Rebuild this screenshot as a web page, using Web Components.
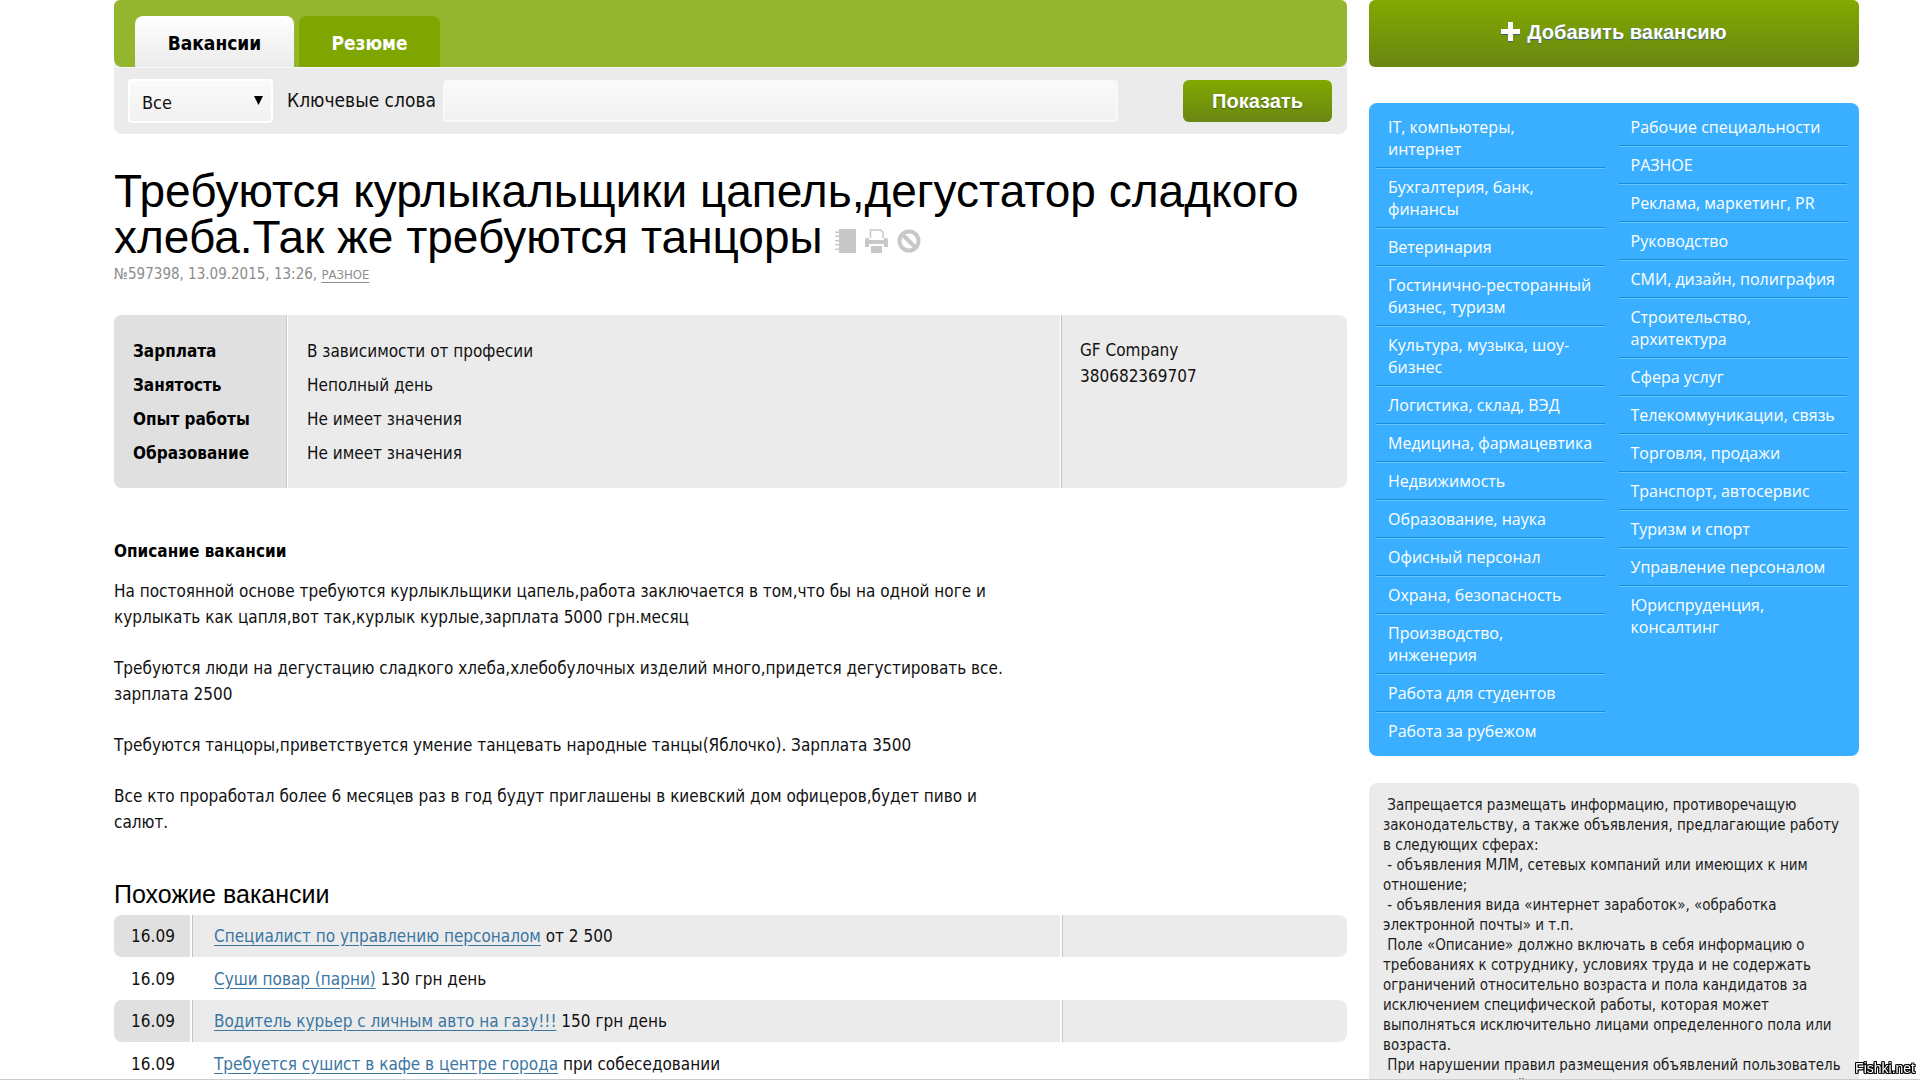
<!DOCTYPE html>
<html lang="ru">
<head>
<meta charset="utf-8">
<title>Требуются курлыкальщики цапель</title>
<style>
body{margin:0;background:#fff;color:#111;font-family:"DejaVu Sans Condensed","Noto Sans",sans-serif;font-size:17px}
</style>
</head>
<body>
<job-page>
  <job-search slot="main"></job-search>
  <job-title slot="main" meta="№597398, 13.09.2015, 13:26," category="РАЗНОЕ">Требуются курлыкальщики цапель,дегустатор сладкого хлеба.Так же требуются танцоры</job-title>
  <job-info slot="main"></job-info>
  <job-description slot="main" heading="Описание вакансии">
    <p>На постоянной основе требуются курлыкльщики цапель,работа заключается в том,что бы на одной ноге и курлыкать как цапля,вот так,курлык курлые,зарплата 5000 грн.месяц</p>
    <p>Требуются люди на дегустацию сладкого хлеба,хлебобулочных изделий много,придется дегустировать все. зарплата 2500</p>
    <p>Требуются танцоры,приветствуется умение танцевать народные танцы(Яблочко). Зарплата 3500</p>
    <p>Все кто проработал более 6 месяцев раз в год будут приглашены в киевский дом офицеров,будет пиво и салют.</p>
  </job-description>
  <similar-jobs slot="main"></similar-jobs>
  <add-button slot="side">Добавить вакансию</add-button>
  <category-list slot="side"></category-list>
  <rules-note slot="side"></rules-note>
</job-page>

<script>
const define = (name, html) => customElements.define(name, class extends HTMLElement {
  connectedCallback() {
    if (this.shadowRoot) return;
    const root = this.attachShadow({mode: 'open'});
    root.innerHTML = typeof html === 'function' ? html(this) : html;
  }
});

define('job-page', `
<style>
:host{display:block;height:100vh;overflow:hidden}
.cols{display:flex;gap:22px;padding:0 61px 0 114px}
main{flex:1;min-width:0}
aside{width:490px}
.edge{position:fixed;left:0;right:0;bottom:0;height:1px;background:#ccc}
.mark{position:fixed;right:5px;bottom:2px;font:14px/20px "Liberation Sans",sans-serif;color:#fff;
 text-shadow:1px 0 #000,-1px 0 #000,0 1px #000,0 -1px #000,1px 1px #000,-1px -1px #000,1px -1px #000,-1px 1px #000}
</style>
<div class="cols"><main><slot name="main"></slot></main><aside><slot name="side"></slot></aside></div>
<div class="edge"></div><div class="mark">Fishki.net</div>`);

define('job-search', `
<style>
:host{display:block;background:#ebebeb;border-radius:8px}
nav{display:flex;align-items:flex-end;gap:5px;height:51px;padding:16px 21px 0;background:#94b62f;border-radius:6px 6px 8px 8px}
nav a{display:block;box-sizing:border-box;height:51px;border-radius:8px 8px 0 0;font-weight:bold;font-size:19px;line-height:54px;text-align:center;text-decoration:none}
.on{width:159px;background:linear-gradient(#fff,#ebebeb);color:#000}
.off{width:141px;background:#7ea500;color:#fff}
form{display:flex;align-items:center;padding:11px 15px 11px 14px;border-top:1px solid #f8f8f8}
.pick{display:grid;width:145px;align-items:center;color:#111}
.pick>*{grid-area:1/1}
select{appearance:none;box-sizing:border-box;width:100%;height:44px;padding:2px 12px 0;border:2px solid #fff;border-radius:4px;background:linear-gradient(#fbfafb,#f2f0f1);font:18px "DejaVu Sans Condensed",sans-serif;color:#111}
.pick svg{justify-self:end;margin:0 10px 1px 0;pointer-events:none}
label.key{flex:1;display:flex;align-items:center;gap:7px;margin:0 65px 0 14px;font-size:19px;white-space:nowrap}
label.key span{padding-bottom:2px}
input{flex:1;min-width:0;box-sizing:border-box;height:42px;border:2px solid #f9f9f9;border-radius:4px;background:linear-gradient(#fbfafb,#f2f0f1);font:inherit}
button{width:149px;height:42px;border:0;border-radius:6px;background:linear-gradient(#82a900,#6a8612);color:#fff;font:bold 20px "Liberation Sans",sans-serif;text-shadow:0 1px 1px #4c6208}
</style>
<nav><a class="on" href="#v">Вакансии</a><a class="off" href="#r">Резюме</a></nav>
<form>
<div class="pick"><select aria-label="Раздел"><option>Все</option></select><svg width="9" height="9" viewBox="0 0 9 9"><path d="M0 0h9L4.500 9z"/></svg></div>
<label class="key"><span>Ключевые слова</span><input type="text"></label>
<button type="button">Показать</button>
</form>`);

define('job-title', el => `
<style>
:host{display:block;padding-top:34px}
h1{margin:0;font:46px/46px "Liberation Sans",sans-serif;color:#000}
.tools{display:inline-flex;gap:9px;line-height:24px;vertical-align:0}
.tools svg{display:block}
.tools a{color:#c8c8c8}
p{margin:3px 0 0;font-size:15px;line-height:22px;color:#8c8c8c}
p a{color:inherit;font-size:13px;text-underline-offset:3px}
</style>
<h1><slot></slot> <span class="tools">
<a href="#note" aria-label="В блокнот"><svg width="21" height="24" viewBox="0 0 21 24" fill="currentColor"><path d="M4 0h17v24H4v-3H0v-1.500h4v-3H0V15h4v-2.500H0V11h4V8H0V6.500h4V4H0V2.500h4z"/></svg></a>
<a href="#print" aria-label="Печать"><svg width="23" height="24" viewBox="0 0 23 24"><path d="M5.500 9V1h10L18 3.500V9" fill="none" stroke="currentColor" stroke-width="1.500"/><path d="M0 11a2 2 0 0 1 2-2h2v2h15V9h2a2 2 0 0 1 2 2v7h-4v-3H4v3H0zM6 17h11v7H6z" fill="currentColor"/></svg></a>
<a href="#ban" aria-label="Скрыть"><svg width="24" height="24" viewBox="0 0 24 24" fill="none" stroke="currentColor" stroke-width="4"><circle cx="12" cy="12" r="9.500"/><path d="M5.500 5.500l13 13"/></svg></a></span></h1>
<p>${el.getAttribute('meta')} <a href="#cat">${el.getAttribute('category')}</a></p>`);

const facts = [['Зарплата','В зависимости от професии'],['Занятость','Неполный день'],['Опыт работы','Не имеет значения'],['Образование','Не имеет значения']];
define('job-info', `
<style>
:host{display:flex;margin-top:29px;background:#ebebeb;border-radius:8px;overflow:hidden;line-height:34px}
table{flex:1;border-spacing:0}
th,td{padding:0 19px;text-align:left;height:34px}
th{width:134px;background:#e0e0e0;border-right:1px solid #c8c8c8;color:#000}
td{border-left:1px solid #fff}
tr:first-child>*{padding-top:19px}
tr:last-child>*{padding-bottom:18px}
.who{box-sizing:border-box;width:286px;padding:22px 18px;border-left:1px solid #c4c4c4;box-shadow:-1px 0 #fff;line-height:26px}
</style>
<table>${facts.map(([k, v]) => `<tr><th scope="row">${k}</th><td>${v}</td></tr>`).join('')}</table>
<div class="who">GF Company<br>380682369707</div>`);

define('job-description', el => `
<style>
:host{display:block;margin-top:50px;max-width:900px;line-height:26px}
h2{margin:0 0 14px;font-size:17px;line-height:26px;color:#000}
::slotted(p){margin:0 0 25px}
</style>
<h2>${el.getAttribute('heading')}</h2><slot></slot>`);

const similar = [['Специалист по управлению персоналом','от 2 500'],['Суши повар (парни)','130 грн день'],['Водитель курьер с личным авто на газу!!!','150 грн день'],['Требуется сушист в кафе в центре города','при собеседовании']];
define('similar-jobs', `
<style>
:host{display:block;margin-top:43px}
h2{margin:0 0 5px;font:25px/32px "Liberation Sans",sans-serif;color:#000}
table{width:100%;border-spacing:0}
td{padding:0;height:43px;white-space:nowrap}
tr:nth-child(odd) td{height:42px;background:#ebebeb}
td:first-child{width:78px;text-align:center}
tr:nth-child(odd) td:first-child{background:#e0e0e0;border-radius:8px 0 0 8px}
td:nth-child(2){padding-left:21px;border-left:1px solid transparent}
td:last-child{width:284px;border-left:1px solid transparent}
tr:nth-child(odd) td:nth-child(2){border-color:#c4c4c4;box-shadow:-2px 0 #fff}
tr:nth-child(odd) td:last-child{border-color:#c4c4c4;box-shadow:-2px 0 #fff;border-radius:0 8px 8px 0}
a{color:#3a76a3;text-underline-offset:3px}
</style>
<h2>Похожие вакансии</h2>
<table>${similar.map(([t, s]) => `<tr><td>16.09</td><td><a href="#job">${t}</a> ${s}</td><td></td></tr>`).join('')}</table>`);

define('add-button', `
<style>
:host{display:block}
button{display:flex;align-items:center;justify-content:center;gap:7px;width:100%;height:67px;padding:0 0 3px;border:0;border-radius:6px;background:linear-gradient(#82a900,#6a8612);color:#fff;font:bold 20px "Liberation Sans",sans-serif;text-shadow:0 1px 1px #35607a}
</style>
<button type="button"><svg width="19" height="20" viewBox="0 0 19 20"><path d="M7 1h5v7h7v5h-7v7H7v-7H0V8h7z" fill="#35607a"/><path d="M7 0h5v7h7v5h-7v7H7v-7H0V7h7z" fill="#fff"/></svg><span><slot></slot></span></button>`);

const cats = [
 ['IT, компьютеры,<br>интернет','Бухгалтерия, банк, финансы','Ветеринария','Гостинично-ресторанный бизнес, туризм','Культура, музыка, шоу-бизнес','Логистика, склад, ВЭД','Медицина, фармацевтика','Недвижимость','Образование, наука','Офисный персонал','Охрана, безопасность','Производство,<br>инженерия','Работа для студентов','Работа за рубежом'],
 ['Рабочие специальности','РАЗНОЕ','Реклама, маркетинг, PR','Руководство','СМИ, дизайн, полиграфия','Строительство, архитектура','Сфера услуг','Телекоммуникации, связь','Торговля, продажи','Транспорт, автосервис','Туризм и спорт','Управление персоналом','Юриспруденция, консалтинг']];
define('category-list', `
<style>
:host{display:flex;gap:14px;margin-top:36px;padding:6px 12px 6px 7px;background:#3aafff;border-radius:8px;font-family:"Open Sans",sans-serif}
ul{flex:1;margin:0;padding:0;list-style:none}
li{padding:7px 4px 7px 12px;border-bottom:1px solid #0f8fdc;box-shadow:0 1px #66c6ff;margin-bottom:1px;font-size:16px;line-height:22px}
li:last-child{border:0;box-shadow:none}
a{color:#fff;text-decoration:none}
</style>
${cats.map(c => `<ul>${c.map(t => `<li><a href="#c">${t}</a></li>`).join('')}</ul>`).join('')}`);

define('rules-note', `
<style>
:host{display:block;margin-top:27px;padding:12px 10px 20px 14px;background:#ebebeb;border-radius:8px;font-size:15px;line-height:20px;color:#1c1c1c}
p{margin:0}
</style>
<p>&nbsp;Запрещается размещать информацию, противоречащую законодательству, а также объявления, предлагающие работу в следующих сферах:</p>
<p>&nbsp;- объявления МЛМ, сетевых компаний или имеющих к ним отношение;</p>
<p>&nbsp;- объявления вида «интернет заработок», «обработка электронной почты» и т.п.</p>
<p>&nbsp;Поле «Описание» должно включать в себя информацию о требованиях к сотруднику, условиях труда и не содержать ограничений относительно возраста и пола кандидатов за исключением специфической работы, которая может выполняться исключительно лицами определенного пола или возраста.</p>
<p>&nbsp;При нарушении правил размещения объявлений пользователь и номер, указанный</p>`);
</script>
</body>
</html>
